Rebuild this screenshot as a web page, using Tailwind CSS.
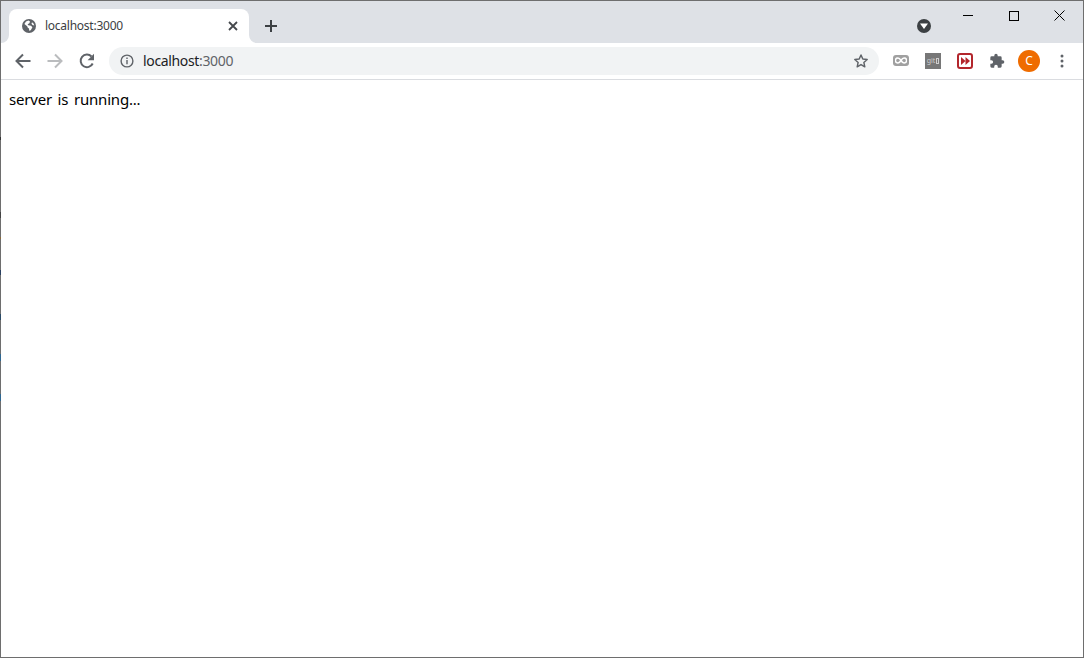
<!DOCTYPE html>
<html lang="en">
<head>
  <meta charset="UTF-8" />
  <meta name="viewport" content="width=device-width, initial-scale=1" />
  <title>localhost:3000</title>
  <script src="https://cdn.jsdelivr.net/npm/@tailwindcss/browser@4"></script>
</head>
<body class="h-[658px] w-[1084px] overflow-hidden bg-white font-['Noto_Sans','Noto_Sans_CJK_KR',sans-serif]">
  <div class="relative flex h-[658px] flex-col border border-[#6e6e6e]">
    <!-- tab strip -->
    <div class="flex h-[42px] shrink-0 bg-[#dee1e6] pl-2">
      <div class="relative mt-2 flex h-[34px] w-[240px] items-center rounded-t-lg bg-white pl-3 pr-2">
        <svg class="absolute bottom-0 left-[-8px] h-2 w-2" viewBox="0 0 8 8"><path d="M8 0v8H0a8 8 0 0 0 8-8z" fill="#fff"/></svg>
        <svg class="absolute bottom-0 right-[-8px] h-2 w-2" viewBox="0 0 8 8"><path d="M0 0v8h8a8 8 0 0 1-8-8z" fill="#fff"/></svg>
        <svg class="h-4 w-4 shrink-0" viewBox="0 0 16 16"><circle cx="8" cy="8" r="7" fill="#5f6368"/><path d="M7.500 2.400 5 3.400 3.400 6l2.800 2.200.6 1.600 1.200.6.200 2.400 1.600-.6 1.600-3-1.400-1.400-2.800-.6-.6-1 1.800-1 .6-1.600zM11 4.200l1.500 1.300.8 1.900-1.800-.5-1-1.200z" fill="#fff"/></svg>
        <span class="ml-2 flex-1 text-xs tracking-[-0.25px] text-[#3c4043]">localhost:3000</span>
        <svg class="h-4 w-4" viewBox="0 0 16 16"><path d="m4 4 8 8M12 4l-8 8" stroke="#45484c" stroke-width="1.800" fill="none"/></svg>
      </div>
      <div class="ml-[14px] mt-[17px] h-4 w-4">
        <svg class="h-4 w-4" viewBox="0 0 16 16"><path d="M8 2v12M2 8h12" stroke="#3c4043" stroke-width="2" fill="none"/></svg>
      </div>
      <div class="ml-auto flex">
        <div class="mr-[14px] mt-[18px] flex h-[14px] w-[14px] items-center justify-center rounded-full bg-[#3c4043]">
          <svg class="h-2 w-2" viewBox="0 0 8 8"><path d="M0 1.500h8L4 7z" fill="#fff"/></svg>
        </div>
        <div class="flex h-[29px] w-[46px] items-center justify-center">
          <div class="h-px w-[10px] bg-black"></div>
        </div>
        <div class="flex h-[29px] w-[46px] items-center justify-center">
          <div class="h-[10px] w-[10px] border border-black"></div>
        </div>
        <div class="flex h-[29px] w-[46px] items-center justify-center pr-[2px]">
          <svg class="h-[11px] w-[11px]" viewBox="0 0 11 11"><path d="m.5.500 10 10M10.500.500l-10 10" stroke="#000" fill="none"/></svg>
        </div>
      </div>
    </div>
    <!-- toolbar -->
    <div class="flex h-[37px] shrink-0 items-center border-b border-[#dadce0] bg-white pb-px">
      <svg class="ml-[14px] h-4 w-4" viewBox="0 0 16 16"><path d="M15.500 8H1.800M8 1.500 1.500 8 8 14.500" stroke="#5f6368" stroke-width="2" fill="none"/></svg>
      <svg class="ml-4 h-4 w-4" viewBox="0 0 16 16"><path d="M.500 8h13.700M8 1.500 14.500 8 8 14.500" stroke="#babcbe" stroke-width="2" fill="none"/></svg>
      <svg class="ml-4 h-4 w-4" viewBox="0 0 16 16"><path d="M13.700 10.500A6.300 6.300 0 1 1 12.500 3.500" stroke="#5f6368" stroke-width="2" fill="none"/><path d="M15 .8v6.400H8.600z" fill="#5f6368"/></svg>
      <div class="ml-[14px] flex h-7 w-[770px] items-center rounded-full bg-[#f1f3f4] pl-[11px] pr-[10px]">
        <svg class="h-[14px] w-[14px]" viewBox="0 0 14 14"><circle cx="7" cy="7" r="5.900" stroke="#5f6368" stroke-width="1.400" fill="none"/><path d="M7 6v4.200M7 3.500v1.400" stroke="#5f6368" stroke-width="1.400" fill="none"/></svg>
        <span class="ml-[9px] flex-1 text-sm tracking-[-0.35px] text-[#202124]">localhost<span class="text-[#5f6368]">:3000</span></span>
        <svg class="h-4 w-4" viewBox="0 0 24 24"><path d="m12 3 2.700 6.100 6.600.7-5 4.400 1.400 6.500L12 17.400l-5.700 3.300 1.400-6.500-5-4.400 6.600-.7z" stroke="#5f6368" stroke-width="2.200" fill="none" stroke-linejoin="round"/></svg>
      </div>
      <div class="ml-[14px] flex h-[11px] w-4 items-center justify-center rounded-[3px] bg-[#a0a0a0]">
        <svg class="h-[7px] w-3" viewBox="0 0 12 7"><path d="M6 3.500C5 1.800 4 1 2.900 1a2.500 2.500 0 0 0 0 5C4 6 5 5.200 6 3.500 7 1.800 8 1 9.100 1a2.500 2.500 0 0 1 0 5C8 6 7 5.200 6 3.500z" stroke="#fff" stroke-width="1.500" fill="none"/></svg>
      </div>
      <div class="ml-4 flex h-4 w-4 items-center justify-center gap-px bg-[#777777] text-[7px] leading-none text-[#cfcfcf]">git<span class="h-[6px] w-[3px] border border-[#cfcfcf]"></span></div>
      <div class="ml-4 flex h-4 w-4 items-center justify-center rounded-[3px] border-2 border-[#b3262c] bg-white">
        <svg class="h-2 w-[9px]" viewBox="0 0 9 8"><path d="M0 0l4.500 4L0 8zM4.500 0 9 4 4.500 8z" fill="#b3262c"/></svg>
      </div>
      <svg class="ml-4 h-4 w-4" viewBox="0 0 24 24"><path d="M20.500 11H19V7a2 2 0 0 0-2-2h-4V3.500a2.500 2.500 0 0 0-5 0V5H4a2 2 0 0 0-2 2v3.800h1.500a2.700 2.700 0 0 1 0 5.400H2V20a2 2 0 0 0 2 2h3.800v-1.500a2.700 2.700 0 0 1 5.400 0V22H17a2 2 0 0 0 2-2v-4h1.500a2.500 2.500 0 0 0 0-5z" fill="#5f6368"/></svg>
      <div class="ml-[13px] flex h-[22px] w-[22px] items-center justify-center rounded-full bg-[#ef6c00] text-xs text-white">C</div>
      <svg class="ml-[14px] h-4 w-4" viewBox="0 0 16 16"><circle cx="8" cy="3" r="1.500" fill="#5f6368"/><circle cx="8" cy="8" r="1.500" fill="#5f6368"/><circle cx="8" cy="13" r="1.500" fill="#5f6368"/></svg>
    </div>
    <!-- page -->
    <div class="flex-1 bg-white px-2 pt-[7px]">
      <p class="text-[15px] leading-6 tracking-[-0.2px] text-black [word-spacing:2px]">server is running...</p>
    </div>
    <!-- specks of the windows behind, showing through the left edge -->
    <div class="absolute left-[-1px] top-[136px] h-[3px] w-px bg-[#333333]"></div>
    <div class="absolute left-[-1px] top-[211px] h-[6px] w-px bg-[#444444]"></div>
    <div class="absolute left-[-1px] top-[236px] h-[2px] w-px bg-[#8a6a3a]"></div>
    <div class="absolute left-[-1px] top-[269px] h-[5px] w-px bg-[#2a4060]"></div>
    <div class="absolute left-[-1px] top-[313px] h-[6px] w-px bg-[#2a4a66]"></div>
    <div class="absolute left-[-1px] top-[353px] h-[7px] w-px bg-[#2f6690]"></div>
    <div class="absolute left-[-1px] top-[393px] h-[7px] w-px bg-[#2f6690]"></div>
  </div>
</body>
</html>
